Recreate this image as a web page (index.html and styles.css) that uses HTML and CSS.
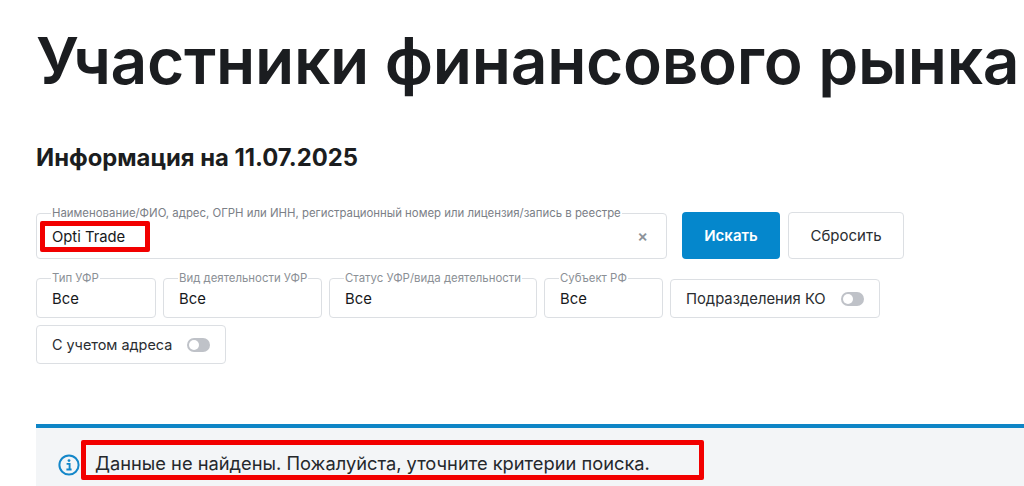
FILE: index.html
```html
<!DOCTYPE html>
<html lang="ru">
<head>
  <meta charset="UTF-8">
  <meta name="viewport" content="width=device-width, initial-scale=1">
  <title>Участники финансового рынка</title>
  <link rel="stylesheet" href="styles.css">
</head>
<body>

<h1 class="page-title">Участники финансового рынка</h1>
<h2 class="info-date">Информация на 11.07.2025</h2>

<form class="filters">
  <div class="search-row">
    <fieldset class="field field-search">
      <legend>Наименование/ФИО, адрес, ОГРН или ИНН, регистрационный номер или лицензия/запись в реестре</legend>
      <span class="field-value">Opti Trade</span>
      <span class="clear">×</span>
      <span class="mark mark-query"></span>
    </fieldset>
    <button type="button" class="btn btn-search">Искать</button>
    <button type="button" class="btn btn-reset">Сбросить</button>
  </div>

  <div class="filter-row">
    <fieldset class="field field-type">
      <legend>Тип УФР</legend>
      <span class="field-value">Все</span>
    </fieldset>
    <fieldset class="field field-activity">
      <legend>Вид деятельности УФР</legend>
      <span class="field-value">Все</span>
    </fieldset>
    <fieldset class="field field-status">
      <legend>Статус УФР/вида деятельности</legend>
      <span class="field-value">Все</span>
    </fieldset>
    <fieldset class="field field-region">
      <legend>Субъект РФ</legend>
      <span class="field-value">Все</span>
    </fieldset>
    <div class="switch-box switch-branches">
      <span>Подразделения КО</span>
      <span class="switch"></span>
    </div>
    <div class="switch-box switch-address">
      <span>С учетом адреса</span>
      <span class="switch"></span>
    </div>
  </div>
</form>

<div class="alert">
  <svg class="alert-icon" width="22" height="22" viewBox="0 0 22 22" fill="none">
    <circle cx="11" cy="11" r="9.6" stroke="#1487c9" stroke-width="2"/>
    <circle cx="11" cy="6.6" r="1.4" fill="#1487c9"/>
    <path d="M8.6 9.9h3v5.4M8.4 15.5h5.2" stroke="#1487c9" stroke-width="1.9"/>
  </svg>
  <p>Данные не найдены. Пожалуйста, уточните критерии поиска.</p>
  <span class="mark mark-message"></span>
</div>

</body>
</html>
```

FILE: styles.css
```css
html, body {
  height: 486px;
  overflow: hidden;
}

body {
  font-family: 'Inter', sans-serif;
  background-color: #fff;
  margin: 0;
  padding: 0 0 0 36px;
  color: #1b1d20;
}

.page-title {
  margin: 25px 0 0;
  font-size: 64px;
  line-height: 72px;
  font-weight: 600;
  letter-spacing: -0.28px;
  white-space: nowrap;
}

.info-date {
  margin: 47px 0 0;
  font-size: 23.8px;
  line-height: 28px;
  font-weight: 700;
}

.filters {
  margin-top: 35px;
}

.search-row {
  display: flex;
  align-items: flex-end;
}

.field {
  position: relative;
  box-sizing: border-box;
  margin: 0;
  padding: 0 0 0 15px;
  border: 1px solid #dcdfe3;
  border-radius: 4px;
  min-width: 0;
}

.field legend {
  padding: 0 1px;
  margin-left: -1px;
  font-size: 11.4px;
  line-height: 13px;
  color: #7b8087;
  white-space: nowrap;
}

.field-value {
  display: block;
  font-size: 14.8px;
  line-height: 20px;
  color: #17191c;
}

.field-search {
  width: 631px;
  height: 52px;
}

.field-search .field-value {
  margin-top: 7px;
}

.clear {
  position: absolute;
  right: 18px;
  top: 6px;
  font-size: 16px;
  line-height: 20px;
  font-weight: 600;
  color: #8d939a;
}

.btn {
  box-sizing: border-box;
  height: 47px;
  border-radius: 4px;
  font-family: inherit;
  font-size: 15px;
}

.btn-search {
  width: 98px;
  margin-left: 15px;
  border: 0;
  background-color: #0587cc;
  color: #fff;
  font-weight: 600;
}

.btn-reset {
  width: 116px;
  margin-left: 8px;
  border: 1px solid #dcdfe3;
  background-color: #fff;
  color: #2a2d31;
}

.filter-row {
  display: flex;
  flex-wrap: wrap;
  gap: 7px;
  width: 850px;
  margin-top: 13px;
}

.filter-row .field {
  height: 46px;
}

.filter-row .field .field-value {
  margin-top: 4px;
}

.filter-row .field legend {
  color: #8b9096;
}

.field-type {
  width: 120px;
}

.field-region {
  width: 119px;
}

.field-activity {
  width: 159px;
}

.field-status {
  width: 208px;
}

.switch-box {
  box-sizing: border-box;
  display: flex;
  align-items: center;
  justify-content: space-between;
  height: 39px;
  margin-top: 7px;
  padding: 0 15px;
  border: 1px solid #dcdfe3;
  border-radius: 4px;
  font-size: 14.8px;
  color: #2a2d31;
}

.switch-branches {
  width: 210px;
}

.switch-address {
  width: 190px;
  margin-top: 0;
  font-size: 14.4px;
}

.switch {
  position: relative;
  width: 23px;
  height: 14px;
  border-radius: 7px;
  background-color: #bfc2c8;
}

.switch::after {
  content: "";
  position: absolute;
  left: 2px;
  top: 2px;
  width: 10px;
  height: 10px;
  border-radius: 50%;
  background-color: #fff;
}

.alert {
  position: relative;
  display: flex;
  align-items: center;
  gap: 15px;
  box-sizing: border-box;
  height: 74px;
  margin-top: 60px;
  padding: 0 0 0 22px;
  border-top: 4px solid #0e85c6;
  background-color: #f3f5f7;
}

.alert-icon {
  flex: none;
  margin-top: 4px;
}

.alert p {
  margin: 0;
  font-size: 18.3px;
  color: #25282c;
}

.mark {
  position: absolute;
  box-sizing: border-box;
  border: 5px solid #f20000;
  border-radius: 2px;
}

.mark-query {
  left: 3px;
  top: 1px;
  width: 110px;
  height: 31px;
}

.mark-message {
  left: 45px;
  top: 12px;
  width: 623px;
  height: 40px;
}
```
